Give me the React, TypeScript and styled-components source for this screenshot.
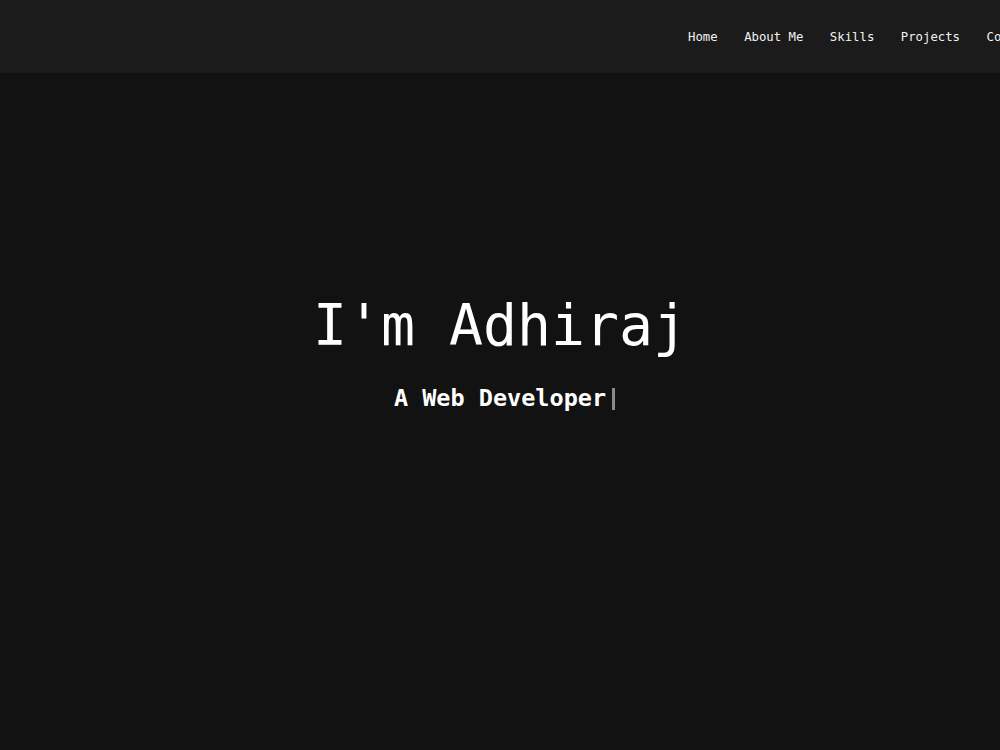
import React from "react";
import styled, { createGlobalStyle } from "styled-components";

const GlobalStyle = createGlobalStyle`
  html, body {
    margin: 0;
    padding: 0;
    background: #121212;
    overflow: hidden;
  }
  body {
    font-family: "DejaVu Sans Mono", "Liberation Mono", monospace;
    color: #ffffff;
  }
`;

const Page = styled.div`
  min-height: 750px;
  background: #121212;
`;

const Header = styled.header`
  height: 73px;
  background: #1b1b1b;
  display: flex;
  align-items: center;
  padding-left: 688px;
  white-space: nowrap;
`;

const NavList = styled.nav`
  display: flex;
  gap: 26.5px;
  flex-shrink: 0;
`;

const NavLink = styled.a`
  font-size: 12.3px;
  color: #f2f2f2;
  text-decoration: none;
  cursor: pointer;
`;

const Hero = styled.section`
  display: flex;
  flex-direction: column;
  align-items: center;
  padding-top: 219px;
`;

const Title = styled.h1`
  margin: 0;
  font-size: 56.5px;
  font-weight: 400;
  line-height: 1.2;
`;

const Subtitle = styled.h2`
  position: relative;
  margin: 24px 0 0;
  font-size: 23.5px;
  font-weight: 700;
  line-height: 1.2;
`;

const Cursor = styled.span`
  position: absolute;
  left: 100%;
  top: 4px;
  width: 3px;
  height: 22px;
  margin-left: 6px;
  background: #8a8a8a;
`;

const links = ["Home", "About Me", "Skills", "Projects", "Contact"];

const App: React.FC = () => {
  return (
    <Page>
      <GlobalStyle />
      <Header>
        <NavList>
          {links.map((link) => (
            <NavLink key={link}>{link}</NavLink>
          ))}
        </NavList>
      </Header>
      <Hero>
        <Title>I'm Adhiraj</Title>
        <Subtitle>
          A Web Developer
          <Cursor />
        </Subtitle>
      </Hero>
    </Page>
  );
};

export default App;
